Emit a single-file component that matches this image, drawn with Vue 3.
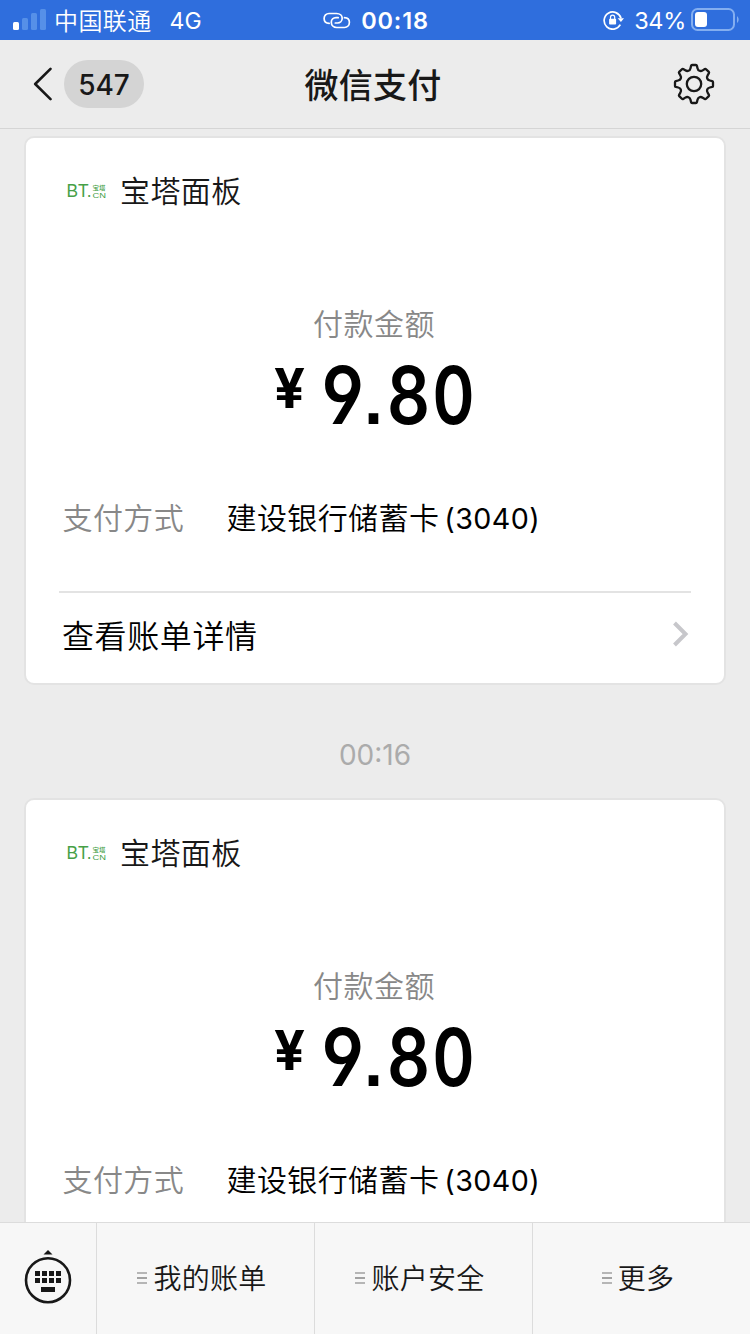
<script setup>
const bills = [
  { id: 1, merchant: '宝塔面板', bank: '建设银行储蓄卡', tail: '(3040)' },
  { id: 2, merchant: '宝塔面板', bank: '建设银行储蓄卡', tail: '(3040)' },
]
// Condensed numerals of the amount: offset and advance of each one
const numerals = [
  { ch: '9', x: 56.5, w: 42.5 },
  { ch: '.', x: 99, w: 19 },
  { ch: '8', x: 122, w: 43 },
  { ch: '0', x: 167.5, w: 42 },
]
const menus = ['我的账单', '账户安全', '更多']
const teeth = [0, 45, 90, 135, 180, 225, 270, 315]

// Outline of an eight-toothed gear around the origin
const turn = (x, y, deg) => {
  const a = (deg * Math.PI) / 180
  return `${(x * Math.cos(a) - y * Math.sin(a)).toFixed(2)} ${(x * Math.sin(a) + y * Math.cos(a)).toFixed(2)}`
}
const gear =
  teeth
    .map((d, i) =>
      [
        `${i ? 'L' : 'M'}${turn(-3.5, -15.8, d)}`,
        `L${turn(-2.9, -18.2, d)}`,
        `Q${turn(-2.7, -19, d)} ${turn(-1.9, -19, d)}`,
        `L${turn(1.9, -19, d)}`,
        `Q${turn(2.7, -19, d)} ${turn(2.9, -18.2, d)}`,
        `L${turn(3.5, -15.8, d)}`,
        `C${turn(4.1, -13.2, d)} ${turn(-4.1, -13.2, d + 45)} ${turn(-3.5, -15.8, d + 45)}`,
      ].join(''),
    )
    .join('') + 'Z'
</script>

<template>
  <div class="screen">
    <header class="status">
      <div class="status-left">
        <svg class="signal" width="34" height="22" viewBox="0 0 34 22">
          <rect x="0" y="13" width="6" height="8" rx="1.5" fill="#fff" />
          <g fill="#5690e8">
            <rect x="9" y="9" width="6" height="12" rx="1.5" />
            <rect x="18" y="4" width="6" height="17" rx="1.5" />
            <rect x="27" y="0" width="6" height="21" rx="1.5" />
          </g>
        </svg>
        <span class="carrier">中国联通</span>
        <span class="net">4G</span>
      </div>
      <div class="status-mid">
        <svg class="link" width="28" height="18" viewBox="0 0 28 18" fill="none" stroke="#fff" stroke-width="1.7" stroke-linecap="round">
          <path d="M6.2 11.4C3 11.2 1.1 9 1.1 6.5 1.1 3.7 3.2 1.5 6 1.5H13.5C17 1.5 19.2 3.6 19.2 6.3 19.2 9 17 11 14.5 11H12.3" />
          <path d="M21.5 5.7C24.7 5.9 26.4 7.9 26.4 10.3 26.4 13.1 24.3 15.500 21.5 15.5H13.8C10.4 15.5 8.3 13 8.3 10.3 8.3 7.6 10.4 5.7 13 5.7H15.2" />
        </svg>
        <span class="clock">00:18</span>
      </div>
      <div class="status-right">
        <svg class="lock" width="22" height="20" viewBox="0 0 22 20">
          <path d="M17.3 14.7A8.6 8.6 0 1 1 18 8.2" fill="none" stroke="#fff" stroke-width="1.7" />
          <path d="M14.7 8.2H21L17.9 12Z" fill="#fff" />
          <rect x="6.1" y="8.8" width="7" height="5.7" rx=".8" fill="#fff" />
          <path d="M7.5 9V7.2a2.1 2.1 0 0 1 4.2 0V9" fill="none" stroke="#fff" stroke-width="1.2" />
        </svg>
        <span class="percent">34%</span>
        <svg class="battery" width="48" height="24" viewBox="0 0 48 24">
          <rect x="1" y="1" width="42" height="21" rx="5.5" fill="none" stroke="#83aef0" stroke-width="2" />
          <rect x="4" y="4" width="12" height="15" rx="3" fill="#fff" />
          <path d="M46 8.2c2.2 1.2 2.2 5.6 0 6.8z" fill="#83aef0" />
        </svg>
      </div>
    </header>

    <nav class="nav">
      <div class="back">
        <svg width="20" height="34" viewBox="0 0 20 34" fill="none" stroke="#181818" stroke-width="2.6" stroke-linecap="round" stroke-linejoin="round">
          <path d="M17.5 1.8 2.2 17 17.5 32.2" />
        </svg>
        <span class="unread">547</span>
      </div>
      <h1>微信支付</h1>
      <svg class="gear" width="42" height="42" viewBox="-21 -21 42 42" fill="none" stroke="#181818" stroke-width="2.3" stroke-linejoin="round">
        <path :d="gear" />
        <circle r="7.2" />
      </svg>
    </nav>

    <main class="chat">
      <template v-for="(bill, i) in bills" :key="bill.id">
        <div v-if="i" class="time">00:16</div>
        <section class="card">
          <div class="merchant">
            <svg class="logo" width="40" height="20" viewBox="0 0 40 20">
              <text class="logo-bt" x="-0.5" y="15" textLength="25" lengthAdjust="spacingAndGlyphs">BT.</text>
              <text class="logo-cjk" x="25.5" y="7.8" textLength="13" lengthAdjust="spacingAndGlyphs">宝塔</text>
              <text class="logo-cn" x="25.5" y="15.5" textLength="13.5" lengthAdjust="spacingAndGlyphs">CN</text>
            </svg>
            <span class="name">{{ bill.merchant }}</span>
          </div>
          <div class="label">付款金额</div>
          <svg class="amount" width="220" height="80" viewBox="0 0 220 80">
            <text class="yen" x="9" y="53" textLength="31" lengthAdjust="spacingAndGlyphs">¥</text>
            <text class="digits" y="68.5">
              <tspan
                v-for="n in numerals"
                :key="n.x"
                :class="{ point: n.ch === '.' }"
                :x="n.x"
                :textLength="n.w"
                lengthAdjust="spacingAndGlyphs"
              >{{ n.ch }}</tspan>
            </text>
          </svg>
          <div class="method">
            <span class="method-key">支付方式</span>
            <span class="method-val">{{ bill.bank }}<span class="tail">{{ bill.tail }}</span></span>
          </div>
          <div class="detail">
            <span>查看账单详情</span>
            <svg width="18" height="28" viewBox="0 0 18 28" fill="none" stroke="#c7c7cb" stroke-width="4">
              <path d="M2.5 3 13.5 14 2.5 25" />
            </svg>
          </div>
        </section>
      </template>
    </main>

    <footer class="tabs">
      <div class="keyboard">
        <svg width="48" height="56" viewBox="0 0 48 56">
          <path d="M19.5 5.5 24 1l4.5 4.500z" fill="#181818" />
          <circle cx="24" cy="31.2" r="22" fill="none" stroke="#181818" stroke-width="2.6" />
          <g fill="#181818">
            <rect v-for="k in 8" :key="k" :x="11 + ((k - 1) % 4) * 7" :y="k > 4 ? 29 : 22" width="5" height="5" />
            <rect x="17" y="38" width="14" height="5" />
          </g>
        </svg>
      </div>
      <div v-for="m in menus" :key="m" class="tab">
        <svg width="10" height="12" viewBox="0 0 10 12">
          <path d="M0 1H10M0 11H10" stroke="#777" stroke-width="1.2" />
          <path d="M0 6H10" stroke="#a2a2a2" stroke-width="2" />
        </svg>
        <span>{{ m }}</span>
      </div>
    </footer>
  </div>
</template>

<style>
body {
  margin: 0;
  background: #ececec;
}
</style>

<style scoped>
.screen {
  width: 750px;
  height: 1334px;
  display: flex;
  flex-direction: column;
  overflow: hidden;
  background: #ececec;
  color: #181818;
  font-family: Inter, "Noto Sans CJK SC", sans-serif;
}
.status {
  flex: none;
  height: 40px;
  display: grid;
  grid-template-columns: 1fr auto 1fr;
  align-items: center;
  background: #2f6edd;
  color: #fff;
  font-size: 24px;
  line-height: 40px;
}
.status-left,
.status-mid,
.status-right {
  display: flex;
  align-items: center;
  height: 40px;
}
.status-left {
  padding-left: 13px;
}
.signal {
  margin-top: -1px;
}
.carrier {
  margin-left: 7px;
  padding-top: 3px;
  letter-spacing: 0.4px;
  font-weight: 350;
}
.net {
  margin-left: 18px;
  font-size: 23px;
  padding-top: 2px;
}
.status-mid {
  gap: 10px;
  padding-left: 2px;
}
.link {
  margin-top: 2px;
}
.clock {
  font-weight: 600;
  font-size: 23.5px;
  letter-spacing: 0.8px;
  padding-top: 2px;
}
.status-right {
  justify-content: flex-end;
  padding-right: 11px;
}
.percent {
  margin: 2px 5px 0 9px;
  font-size: 23.5px;
  letter-spacing: -0.3px;
}
.nav {
  flex: none;
  box-sizing: border-box;
  height: 89px;
  padding: 0 35px 0 33px;
  display: grid;
  grid-template-columns: 1fr auto 1fr;
  align-items: center;
  border-bottom: 1px solid #d5d5d5;
}
.back {
  display: flex;
  align-items: center;
  gap: 11px;
}
.unread {
  width: 80px;
  height: 48px;
  border-radius: 24px;
  background: #d4d4d4;
  text-align: center;
  font-size: 28px;
  line-height: 50px;
  font-weight: 500;
}
h1 {
  margin: 0;
  padding: 3px 2px 0 0;
  font-size: 34px;
  line-height: 50px;
  font-weight: 500;
  letter-spacing: 0.2px;
}
.gear {
  justify-self: end;
}
.chat {
  flex: 1;
  min-height: 0;
  overflow: hidden;
  padding: 7px 24px 0;
}
.card {
  box-sizing: border-box;
  height: 549px;
  border: 2px solid #e3e3e3;
  border-radius: 10px;
  background: #fff;
  padding: 31px 33px 0;
  display: flex;
  flex-direction: column;
}
.merchant {
  display: flex;
  align-items: center;
  height: 44px;
  padding-left: 8px;
}
.logo {
  flex: none;
  margin-top: 2px;
  overflow: visible;
  fill: #46a047;
}
.logo-bt {
  font: 400 18px "Liberation Sans", sans-serif;
}
.logo-cjk {
  font: 500 6px "Noto Sans CJK SC", sans-serif;
}
.logo-cn {
  font: 400 8px "Liberation Sans", sans-serif;
}
.name {
  margin-left: 13px;
  font-size: 30px;
  line-height: 44px;
  letter-spacing: 0.4px;
  font-weight: 350;
}
.label {
  margin-top: 89px;
  height: 44px;
  padding-right: 2px;
  text-align: center;
  font-size: 30px;
  line-height: 44px;
  letter-spacing: 0.5px;
  color: #888;
  font-weight: 350;
}
.amount {
  align-self: center;
  margin-top: 9px;
  flex: none;
  overflow: visible;
  fill: #000;
}
.digits {
  font: 620 80px Inter, sans-serif;
  font-feature-settings: "cv04", "cv09", "ss01";
}
.point {
  font: 700 72px "Liberation Sans", sans-serif;
}
.yen {
  font: 700 55px Inter, sans-serif;
}
.method {
  margin-top: 61px;
  height: 44px;
  display: flex;
  align-items: center;
  padding-left: 3.5px;
  font-size: 30px;
  line-height: 44px;
  letter-spacing: 0.4px;
  font-weight: 350;
}
.method-key {
  width: 164px;
  color: #888;
}
.method-val {
  color: #000;
}
.tail {
  margin-left: 5px;
  font-size: 28.7px;
  font-weight: 400;
}
.detail {
  margin-top: 51px;
  border-top: 2px solid #e3e3e3;
  height: 82px;
  padding: 0 1px 0 3px;
  display: flex;
  align-items: center;
  justify-content: space-between;
  font-size: 32px;
  letter-spacing: 0.6px;
  color: #000;
  font-weight: 350;
}
.time {
  height: 113px;
  line-height: 141px;
  text-align: center;
  font-size: 28px;
  color: #ababab;
}
.tabs {
  flex: none;
  box-sizing: border-box;
  height: 112px;
  display: grid;
  grid-template-columns: 96px 218px 218px 218px;
  border-top: 1px solid #dcdcdc;
  background: #f7f7f7;
}
.keyboard {
  display: flex;
  justify-content: center;
  padding-top: 26px;
}
.tab {
  display: flex;
  align-items: center;
  justify-content: center;
  gap: 6px;
  padding: 0 7px 2px 0;
  border-left: 1px solid #dcdcdc;
  font-size: 28px;
  letter-spacing: 0.3px;
  font-weight: 350;
}
.tab span {
  margin-top: -2px;
}
</style>
